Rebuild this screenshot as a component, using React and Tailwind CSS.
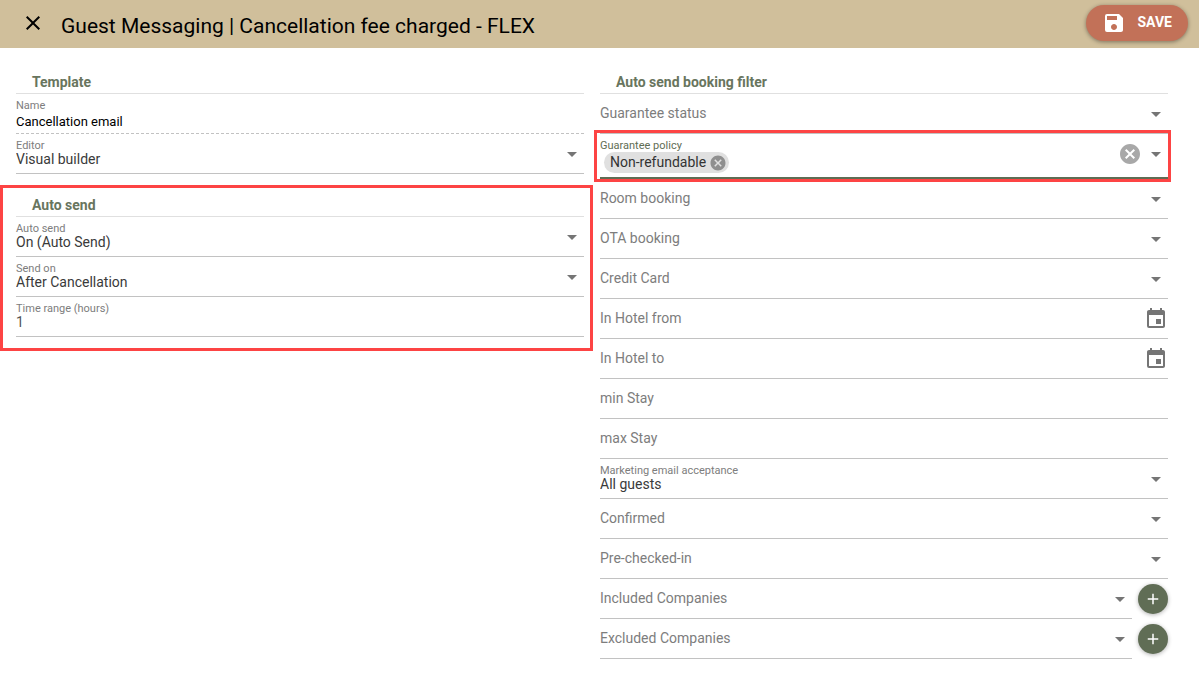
import { useId } from "react";
import {
  MdAdd,
  MdArrowDropDown,
  MdCancel,
  MdClose,
  MdEvent,
  MdSave,
} from "react-icons/md";

function Heading({ children }) {
  return (
    <h2 className="flex h-8 items-center border-b border-[#e0e0e0] px-4 pt-2 text-sm font-bold text-[#68755e]">
      {children}
    </h2>
  );
}

function FieldLabel({ id, floating, active, children }) {
  const place = floating ? "self-start pt-1 text-[11px]" : "self-center pb-0.5 text-sm";
  return (
    <label
      htmlFor={id}
      className={`pointer-events-none z-10 col-start-1 row-start-1 justify-self-start ${place} ${
        active ? "text-[#5f6d54]" : "text-[#7d7d7d]"
      }`}
    >
      {children}
    </label>
  );
}

function SelectField({ label, value }) {
  const id = useId();
  return (
    <div className="grid h-10 flex-1 border-b border-[#c2c2c2]">
      <FieldLabel id={id} floating={Boolean(value)}>
        {label}
      </FieldLabel>
      <select
        id={id}
        className="col-start-1 row-start-1 w-full appearance-none bg-transparent pt-2.5 text-sm text-[#3a3a3a] outline-none"
      >
        <option>{value}</option>
      </select>
      <MdArrowDropDown
        size={24}
        className="pointer-events-none col-start-1 row-start-1 self-center justify-self-end text-[#757575]"
      />
    </div>
  );
}

function TextField({ label, value, dashed, icon }) {
  const id = useId();
  return (
    <div
      className={`grid h-10 border-b border-[#c2c2c2] ${dashed ? "border-dashed" : ""}`}
    >
      <FieldLabel id={id} floating={Boolean(value)}>
        {label}
      </FieldLabel>
      <input
        id={id}
        type="text"
        defaultValue={value}
        readOnly={dashed}
        className={`col-start-1 row-start-1 w-full bg-transparent outline-none ${
          dashed ? "pt-4 text-[13px] text-black" : "pt-2.5 text-sm text-[#555]"
        }`}
      />
      {icon}
    </div>
  );
}

function DateField({ label }) {
  return (
    <TextField
      label={label}
      icon={
        <button
          type="button"
          aria-label={`Pick date: ${label}`}
          className="z-10 col-start-1 row-start-1 self-center justify-self-end text-[#757575]"
        >
          <MdEvent size={24} />
        </button>
      }
    />
  );
}

function CompanyField({ label }) {
  return (
    <div className="flex items-center gap-1.5">
      <SelectField label={label} />
      <button
        type="button"
        aria-label={`Add to ${label}`}
        className="flex size-[30px] items-center justify-center rounded-full bg-[#606d55] text-white shadow-[0_1px_4px_rgba(0,0,0,0.3)]"
      >
        <MdAdd size={18} />
      </button>
    </div>
  );
}

function GuaranteePolicy() {
  const id = useId();
  return (
    <div className="relative grid h-[45px] border-b-2 border-[#5f6d54]">
      <FieldLabel id={id} floating active>
        Guarantee policy
      </FieldLabel>
      <div className="col-start-1 row-start-1 flex items-start pt-[18px] pl-1">
        <span className="flex h-[21px] items-center gap-[3px] rounded-full bg-[#e0e0e0] pr-0.5 pl-1.5 text-sm text-[#333]">
          <span className="pb-0.5">Non-refundable</span>
          <button type="button" aria-label="Remove Non-refundable" className="text-[#8f8f8f]">
            <MdCancel size={18} />
          </button>
        </span>
        <input id={id} type="text" className="min-w-0 flex-1 bg-transparent outline-none" />
      </div>
      <div className="z-10 col-start-1 row-start-1 flex h-10 items-center gap-0.5 self-start justify-self-end">
        <button type="button" aria-label="Clear" className="text-[#a8a8a8]">
          <MdCancel size={24} />
        </button>
        <MdArrowDropDown size={24} className="text-[#757575]" />
      </div>
      <div className="pointer-events-none absolute -top-1 -right-[3px] -bottom-[5px] -left-1.5 z-20 border-3 border-[#fd4444]" />
    </div>
  );
}

export default function App() {
  return (
    <div className="min-h-screen bg-white font-[Roboto,sans-serif]">
      <header className="flex h-12 items-center bg-[#d0bf9b] pr-[11px] pb-0.5 pl-[21px]">
        <button type="button" aria-label="Close" className="mr-4 text-black">
          <MdClose size={24} />
        </button>
        <h1 className="pt-2 text-[21px] text-black">
          Guest Messaging | Cancellation fee charged - FLEX
        </h1>
        <button
          type="button"
          className="ml-auto flex h-9 items-center gap-3 rounded-full bg-[#c27158] px-4 text-sm font-bold text-white shadow-[0_1px_4px_rgba(0,0,0,0.4)]"
        >
          <MdSave size={24} />
          <span className="pb-0.5">SAVE</span>
        </button>
      </header>

      <main className="grid grid-cols-2 items-start gap-x-4 pt-3.5 pr-[31px] pl-4">
        <div className="flex flex-col gap-[11px]">
          <section>
            <Heading>Template</Heading>
            <TextField label="Name" value="Cancellation email" dashed />
            <SelectField label="Editor" value="Visual builder" />
          </section>
          <section className="relative pb-[14px]">
            <Heading>Auto send</Heading>
            <SelectField label="Auto send" value="On (Auto Send)" />
            <SelectField label="Send on" value="After Cancellation" />
            <TextField label="Time range (hours)" value="1" />
            <div className="pointer-events-none absolute inset-y-0 -right-[9px] -left-4 border-3 border-[#fd4444]" />
          </section>
        </div>

        <section>
          <Heading>Auto send booking filter</Heading>
          <SelectField label="Guarantee status" />
          <GuaranteePolicy />
          <SelectField label="Room booking" />
          <SelectField label="OTA booking" />
          <SelectField label="Credit Card" />
          <DateField label="In Hotel from" />
          <DateField label="In Hotel to" />
          <TextField label="min Stay" />
          <TextField label="max Stay" />
          <SelectField label="Marketing email acceptance" value="All guests" />
          <SelectField label="Confirmed" />
          <SelectField label="Pre-checked-in" />
          <CompanyField label="Included Companies" />
          <CompanyField label="Excluded Companies" />
        </section>
      </main>
    </div>
  );
}
